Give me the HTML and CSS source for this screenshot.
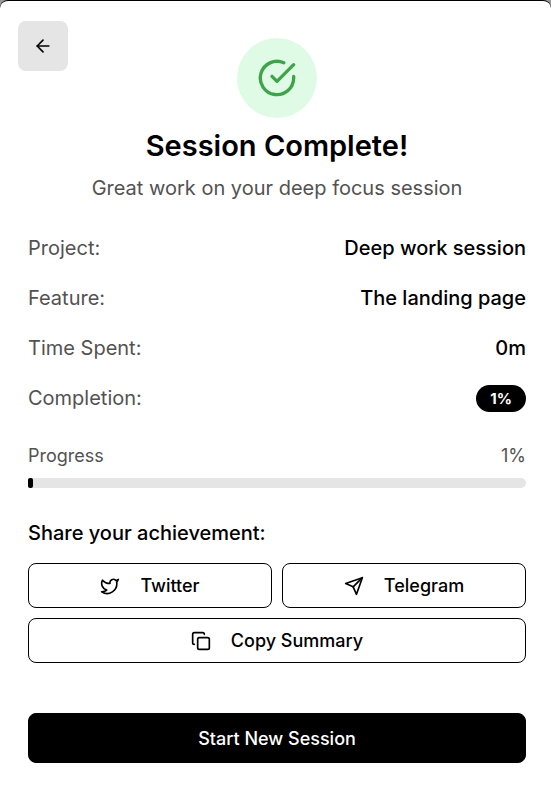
FILE: index.html
```html
<!DOCTYPE html>
<html lang="en">
<head>
    <meta charset="UTF-8">
    <meta name="viewport" content="width=device-width, initial-scale=1.0">
    <title>Session Complete</title>
    <link rel="stylesheet" href="styles.css">
</head>
<body>

    <main class="card">
        <button type="button" class="back-button" aria-label="Back">
            <svg class="icon" viewBox="0 0 24 24"><path d="m12 19-7-7 7-7"/><path d="M19 12H5"/></svg>
        </button>

        <header class="header">
            <div class="success">
                <svg class="icon icon-large" viewBox="0 0 24 24"><path d="M22 11.08V12a10 10 0 1 1-5.93-9.14"/><path d="m9 11 3 3L22 4"/></svg>
            </div>
            <h1>Session Complete!</h1>
            <p class="subtitle">Great work on your deep focus session</p>
        </header>

        <dl class="summary">
            <div class="row">
                <dt>Project:</dt>
                <dd>Deep work session</dd>
            </div>
            <div class="row">
                <dt>Feature:</dt>
                <dd>The landing page</dd>
            </div>
            <div class="row">
                <dt>Time Spent:</dt>
                <dd>0m</dd>
            </div>
            <div class="row">
                <dt>Completion:</dt>
                <dd class="badge">1%</dd>
            </div>
        </dl>

        <section class="progress">
            <div class="progress-label">
                <span id="progress-name">Progress</span>
                <span>1%</span>
            </div>
            <div class="track" role="progressbar" aria-labelledby="progress-name" aria-valuenow="1" aria-valuemin="0" aria-valuemax="100">
                <div class="bar" style="width: 1%"></div>
            </div>
        </section>

        <section class="share">
            <h2>Share your achievement:</h2>
            <div class="share-grid">
                <button type="button" class="button">
                    <svg class="icon" viewBox="0 0 24 24"><path d="M22 4s-.7 2.1-2 3.4c1.6 10-9.4 17.3-18 11.6 2.2.1 4.4-.6 6-2C3 15.5.5 9.6 3 5c2.2 2.6 5.6 4.1 9 4-.9-4.2 4-6.6 7-3.8 1.1 0 3-1.2 3-1.2z"/></svg>
                    Twitter
                </button>
                <button type="button" class="button">
                    <svg class="icon" viewBox="0 0 24 24"><path d="m22 2-7 20-4-9-9-4Z"/><path d="M22 2 11 13"/></svg>
                    Telegram
                </button>
                <button type="button" class="button button-wide">
                    <svg class="icon" viewBox="0 0 24 24"><rect width="14" height="14" x="8" y="8" rx="2" ry="2"/><path d="M4 16c-1.1 0-2-.9-2-2V4c0-1.1.9-2 2-2h10c1.1 0 2 .9 2 2"/></svg>
                    Copy Summary
                </button>
            </div>
        </section>

        <button type="button" class="button button-primary">Start New Session</button>
    </main>

</body>
</html>
```

FILE: styles.css
```css
* {
    box-sizing: border-box;
}

body {
    margin: 0;
    background-color: #999;
    color: #000;
    font-family: Inter, sans-serif;
    font-size: 20px;
    line-height: 30px;
}

h1, h2, p, dl, dd {
    margin: 0;
}

.card {
    position: relative;
    display: flex;
    flex-direction: column;
    min-height: 100vh;
    padding: 37px 25px 28px 28px;
    background-color: #fff;
    border-top: 1px solid #000;
    border-radius: 8px 8px 0 0;
}

/* Icons */
.icon {
    flex: none;
    width: 20px;
    height: 20px;
    fill: none;
    stroke: currentColor;
    stroke-width: 2;
    stroke-linecap: round;
    stroke-linejoin: round;
}

.icon-large {
    width: 40px;
    height: 40px;
}

/* Sits over the corner of the card */
.back-button {
    position: absolute;
    top: 20px;
    left: 18px;
    display: flex;
    align-items: center;
    justify-content: center;
    width: 50px;
    height: 50px;
    padding: 0;
    border: none;
    border-radius: 8px;
    background-color: #e5e5e5;
    color: #000;
    cursor: pointer;
}

/* Header */
.header {
    display: flex;
    flex-direction: column;
    align-items: center;
    text-align: center;
}

.success {
    display: flex;
    align-items: center;
    justify-content: center;
    width: 80px;
    height: 80px;
    margin-bottom: 8px;
    border-radius: 50%;
    background-color: #dffbe6;
    color: #3fa34a;
}

h1 {
    margin-bottom: 7px;
    font-size: 29px;
    font-weight: 600;
    line-height: 40px;
}

.subtitle {
    color: #525252;
}

/* Summary */
.summary {
    display: flex;
    flex-direction: column;
    gap: 20px;
    margin-top: 30px;
}

.row {
    display: flex;
    align-items: center;
    justify-content: space-between;
    color: #525252;
}

.row dd {
    color: #000;
    font-weight: 500;
}

.row .badge {
    padding: 3px 14px;
    border-radius: 14px;
    background-color: #000;
    color: #fff;
    font-size: 15px;
    font-weight: 700;
    line-height: 21px;
}

/* Progress */
.progress {
    margin-top: 30px;
}

.progress-label {
    display: flex;
    justify-content: space-between;
    margin-bottom: 10px;
    color: #525252;
    font-size: 18px;
    line-height: 25px;
}

.track {
    height: 10px;
    border-radius: 5px;
    background-color: #e5e5e5;
}

.bar {
    height: 100%;
    border-radius: 2px;
    background-color: #000;
}

/* Share */
.share {
    margin-top: 30px;
}

h2 {
    margin-bottom: 15px;
    font-size: 20px;
    font-weight: 500;
    line-height: 30px;
}

.share-grid {
    display: grid;
    grid-template-columns: 1fr 1fr;
    gap: 10px;
}

.button {
    display: flex;
    align-items: center;
    justify-content: center;
    gap: 20px;
    height: 45px;
    padding: 0 15px;
    border: 1px solid #000;
    border-radius: 8px;
    background-color: #fff;
    color: #000;
    font-family: inherit;
    font-size: 18px;
    font-weight: 500;
    line-height: 25px;
    cursor: pointer;
}

.button-wide {
    grid-column: 1 / -1;
}

.button-primary {
    height: 50px;
    margin-top: 50px;
    background-color: #000;
    color: #fff;
}
```
